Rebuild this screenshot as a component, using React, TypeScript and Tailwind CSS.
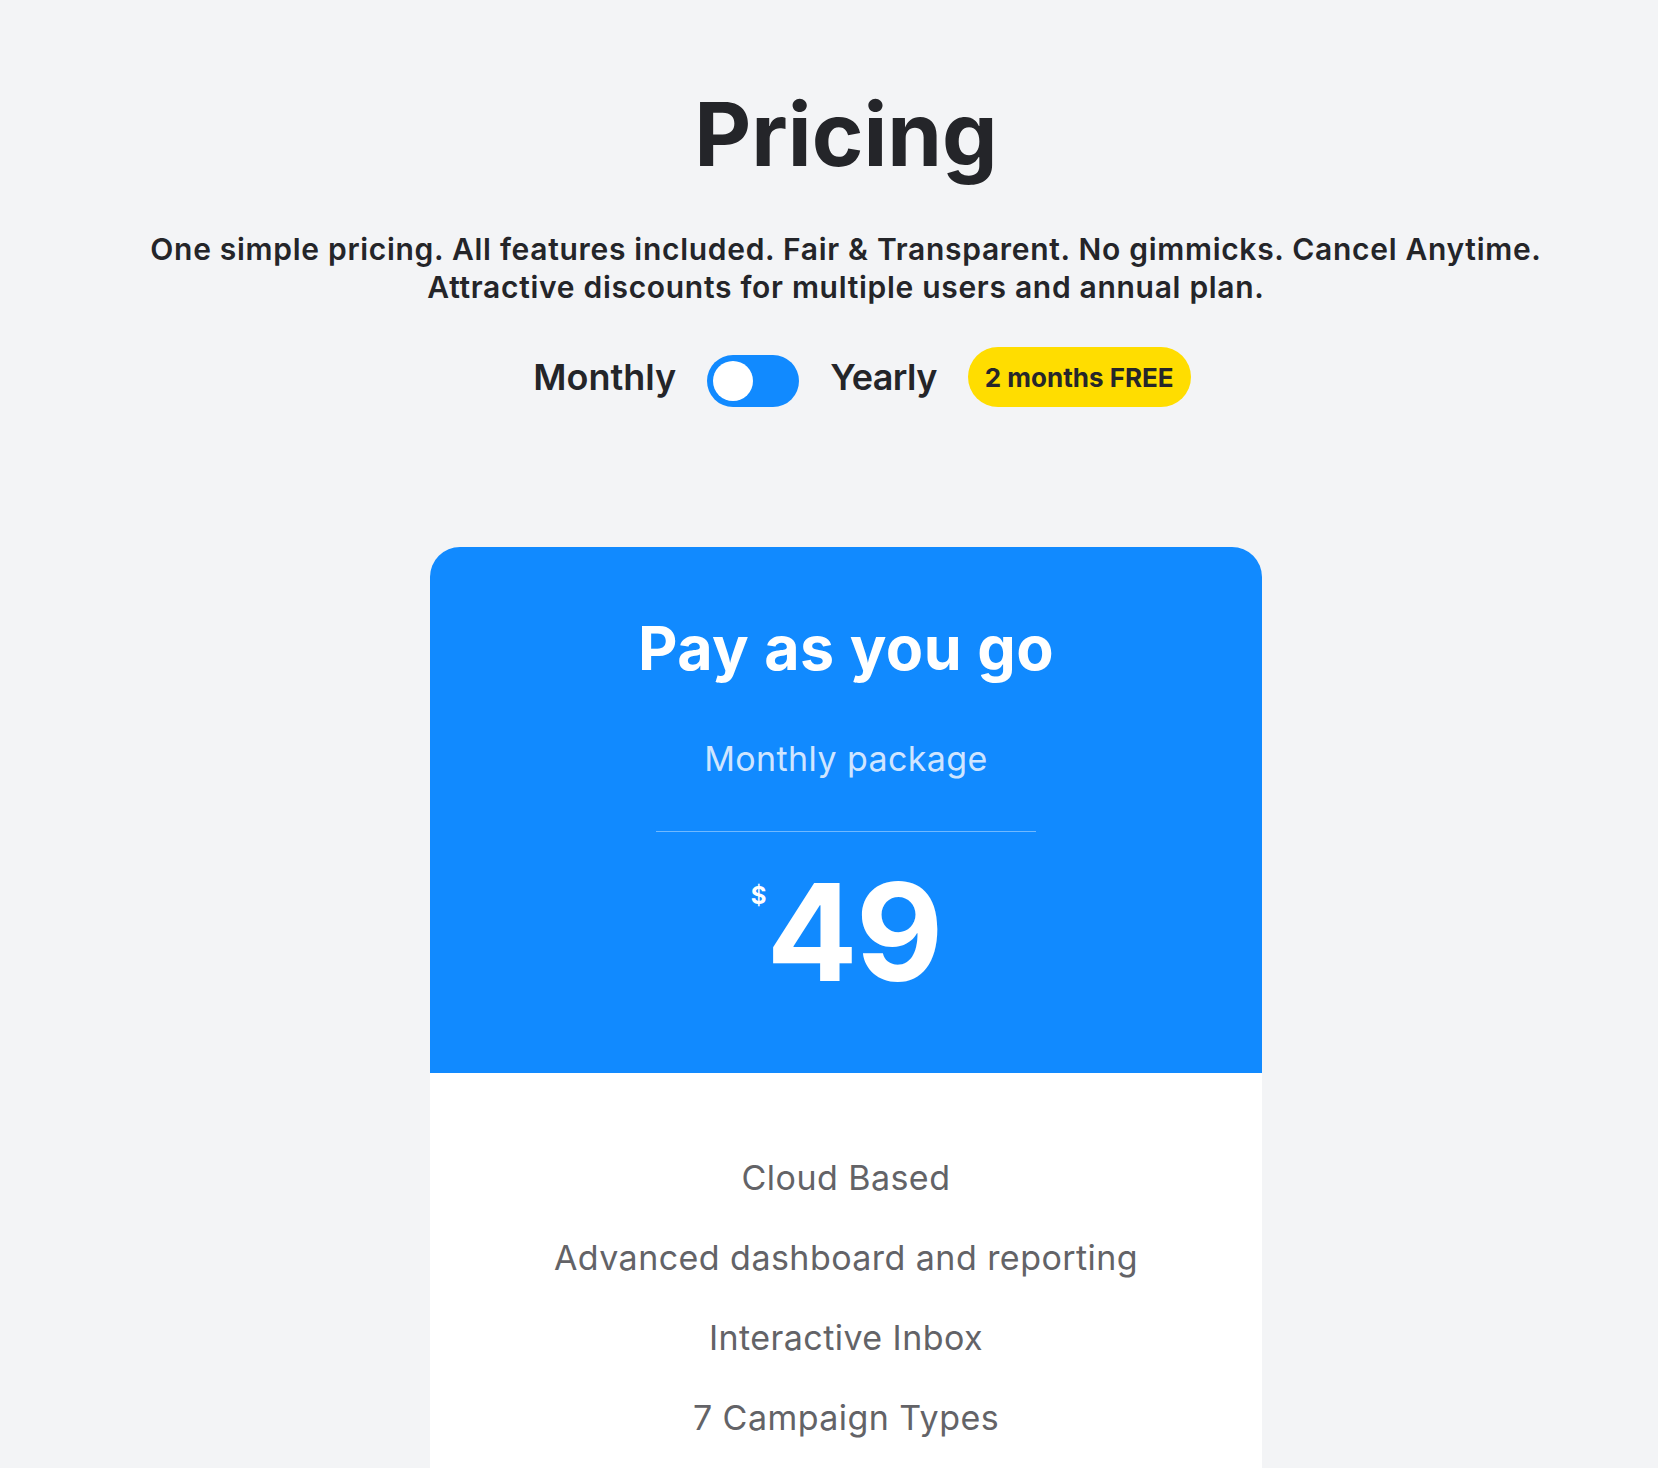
import { useState } from 'react';

const features = [
  'Cloud Based',
  'Advanced dashboard and reporting',
  'Interactive Inbox',
  '7 Campaign Types',
];

export default function App() {
  const [yearly, setYearly] = useState(false);

  return (
    <div className="min-h-screen bg-[#f3f4f6] font-['Inter',sans-serif] text-[#242529]">
      <section className="flex flex-col items-center pt-[90px] pl-[34px]">
        <h1 className="text-[88px] font-bold leading-none">Pricing</h1>

        <p className="mt-[52px] text-center text-[30px] font-semibold leading-[38px] tracking-[0.7px]">
          One simple pricing. All features included. Fair &amp; Transparent. No gimmicks. Cancel Anytime.
          <br />
          Attractive discounts for multiple users and annual plan.
        </p>

        {/* Billing toggle */}
        <div className="mt-[41px] flex items-center gap-[31px] pl-[32px]">
          <span className="text-[36px] font-semibold leading-none">Monthly</span>
          <button
            onClick={() => setYearly(!yearly)}
            className="mt-[8px] flex h-[52px] w-[92px] items-center rounded-full bg-[#118aff] p-[6px]"
          >
            <span
              className={`h-[40px] w-[40px] rounded-full bg-white transition-transform ${
                yearly ? 'translate-x-[40px]' : 'translate-x-0'
              }`}
            />
          </button>
          <span className="text-[36px] font-semibold leading-none tracking-[-0.6px]">Yearly</span>
          <span className="flex h-[60px] items-center rounded-full bg-[#ffdd00] px-[17px] text-[26px] font-bold text-[#26262a]">
            2 months FREE
          </span>
        </div>

        {/* Plan card */}
        <div className="mt-[140px] w-[832px] overflow-hidden rounded-t-[30px] bg-white">
          <div className="flex flex-col items-center bg-[#118aff] pt-[71px] pb-[73px] text-white">
            <h2 className="text-[61px] font-bold leading-none tracking-[0.5px]">Pay as you go</h2>
            <p className="mt-[63px] text-[34px] leading-none tracking-[0.4px] text-[#cfe5ff]">
              {yearly ? 'Yearly package' : 'Monthly package'}
            </p>
            <div className="mt-[55px] h-px w-[380px] bg-white/40" />
            <div className="mt-[33px] flex items-start">
              <span className="mt-[19px] text-[24px] font-bold leading-none">$</span>
              <span className="text-[135px] font-bold leading-none tracking-[-2px]">
                {yearly ? '490' : '49'}
              </span>
            </div>
          </div>

          <ul className="flex flex-col items-center pt-[65px] pb-[200px] text-[34px] leading-[80px] tracking-[0.45px] text-[#636367]">
            {features.map((f) => (
              <li key={f}>{f}</li>
            ))}
          </ul>
        </div>
      </section>
    </div>
  );
}
